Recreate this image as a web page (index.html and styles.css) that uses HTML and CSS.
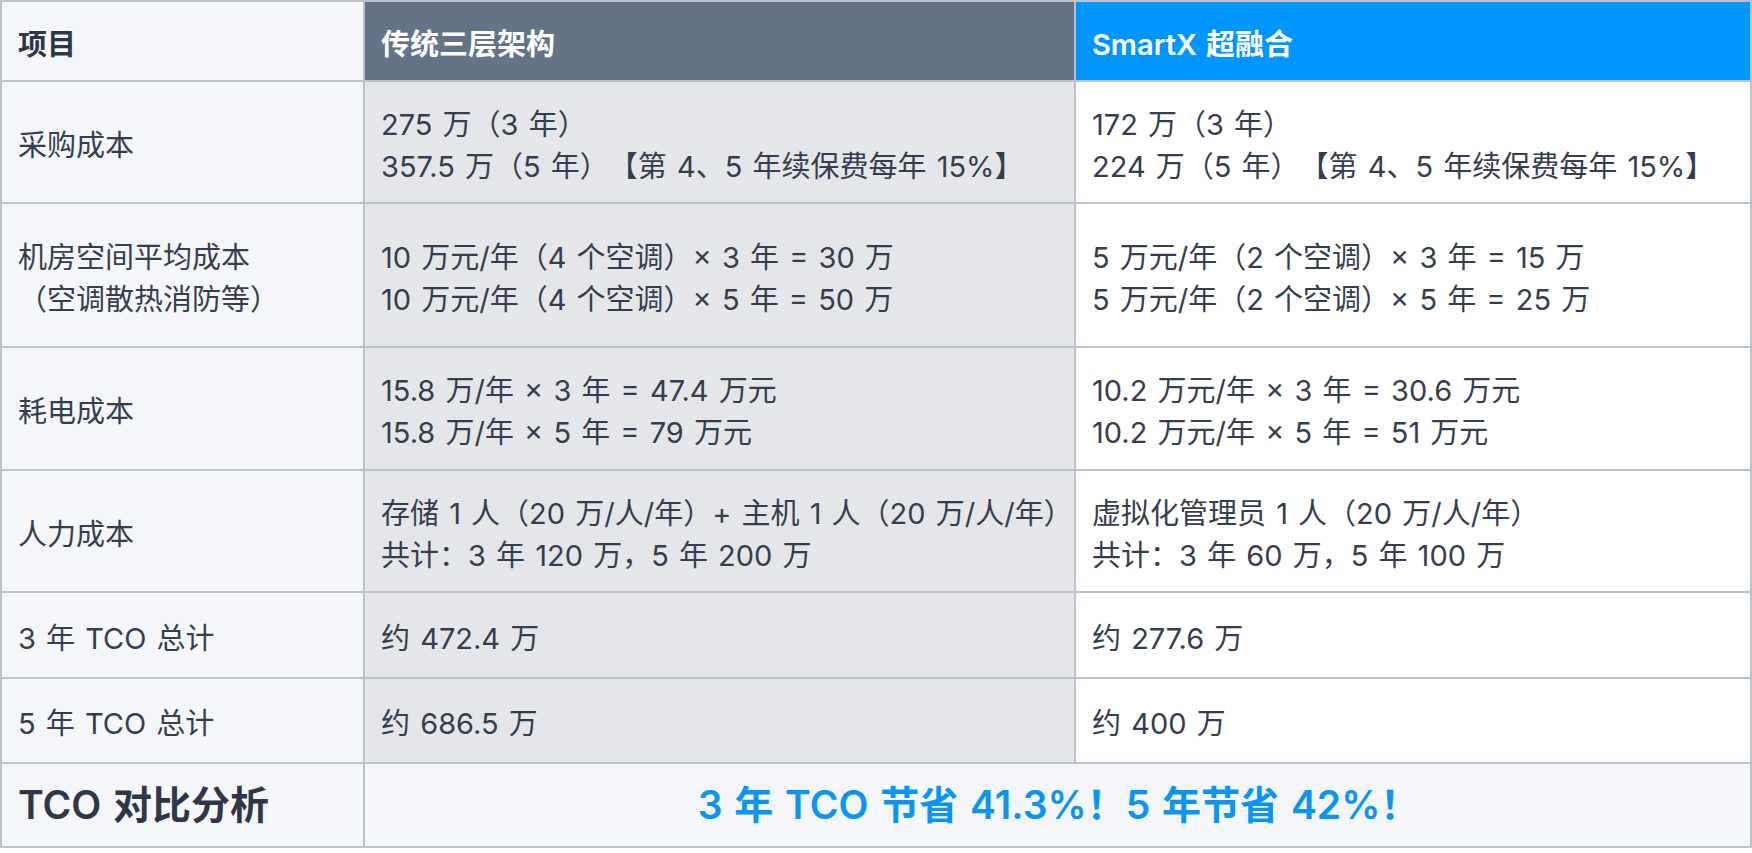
FILE: index.html
```html
<!DOCTYPE html>
<html lang="zh-CN">
<head>
    <meta charset="UTF-8">
    <meta name="viewport" content="width=device-width, initial-scale=1.0">
    <title>TCO 对比</title>
    <link rel="stylesheet" href="styles.css">
</head>
<body>
    <table class="tco-table">
        <colgroup>
            <col class="col-item">
            <col class="col-legacy">
            <col class="col-smartx">
        </colgroup>
        <thead>
            <tr class="row-head">
                <th class="cell-item">项目</th>
                <th class="cell-legacy">传统三层架构</th>
                <th class="cell-smartx">SmartX 超融合</th>
            </tr>
        </thead>
        <tbody>
            <tr class="row-1">
                <td class="cell-item">采购成本</td>
                <td class="cell-legacy">275 万（3 年）<br>357.5 万（5 年）【第 4、5 年续保费每年 15%】</td>
                <td class="cell-smartx">172 万（3 年）<br>224 万（5 年）【第 4、5 年续保费每年 15%】</td>
            </tr>
            <tr class="row-2">
                <td class="cell-item">机房空间平均成本<br>（空调散热消防等）</td>
                <td class="cell-legacy">10 万元/年（4 个空调）× 3 年 = 30 万<br>10 万元/年（4 个空调）× 5 年 = 50 万</td>
                <td class="cell-smartx">5 万元/年（2 个空调）× 3 年 = 15 万<br>5 万元/年（2 个空调）× 5 年 = 25 万</td>
            </tr>
            <tr class="row-3">
                <td class="cell-item">耗电成本</td>
                <td class="cell-legacy">15.8 万/年 × 3 年 = 47.4 万元<br>15.8 万/年 × 5 年 = 79 万元</td>
                <td class="cell-smartx">10.2 万元/年 × 3 年 = 30.6 万元<br>10.2 万元/年 × 5 年 = 51 万元</td>
            </tr>
            <tr class="row-4">
                <td class="cell-item">人力成本</td>
                <td class="cell-legacy">存储 1 人（20 万/人/年）+ 主机 1 人（20 万/人/年）<br>共计：3 年 120 万，5 年 200 万</td>
                <td class="cell-smartx">虚拟化管理员 1 人（20 万/人/年）<br>共计：3 年 60 万，5 年 100 万</td>
            </tr>
            <tr class="row-5">
                <td class="cell-item">3 年 TCO 总计</td>
                <td class="cell-legacy">约 472.4 万</td>
                <td class="cell-smartx">约 277.6 万</td>
            </tr>
            <tr class="row-6">
                <td class="cell-item">5 年 TCO 总计</td>
                <td class="cell-legacy">约 686.5 万</td>
                <td class="cell-smartx">约 400 万</td>
            </tr>
            <tr class="row-summary">
                <td class="cell-item summary-title">TCO 对比分析</td>
                <td class="summary-value" colspan="2">3 年 TCO 节省 41.3%！5 年节省 42%！</td>
            </tr>
        </tbody>
    </table>
</body>
</html>
```

FILE: styles.css
```css
body {
    margin: 0;
    background-color: #ffffff;
    font-family: Inter, "Noto Sans CJK SC", sans-serif;
    color: #363e4d;
    text-spacing-trim: space-all;
}

.tco-table {
    width: 1750px;
    border-collapse: collapse;
    table-layout: fixed;
    border: 2px solid #bcc1cb;
}

.col-item {
    width: 363px;
}

.col-legacy {
    width: 711px;
}

.col-smartx {
    width: 676px;
}

.tco-table th,
.tco-table td {
    border: 2px solid #bcc1cb;
    padding: 7px 14px 0 16px;
    font-size: 29px;
    line-height: 42px;
    word-spacing: 2px;
    text-align: left;
    vertical-align: middle;
    white-space: nowrap;
}

.tco-table th {
    font-weight: 600;
}

.cell-item {
    background-color: #f4f6fa;
}

.cell-legacy {
    background-color: #e4e6ea;
}

.cell-smartx {
    background-color: #ffffff;
}

th.cell-item {
    color: #2f3746;
}

th.cell-legacy {
    background-color: #647387;
    color: #ffffff;
}

th.cell-smartx {
    background-color: #0096ff;
    color: #ffffff;
}

.row-head { height: 80px; }
.row-1 { height: 122px; }
.row-2 { height: 144px; }
.row-3 { height: 123px; }
.row-4 { height: 122px; }
.row-5 { height: 86px; }
.row-6 { height: 85px; }
.row-summary { height: 84px; }

.row-summary td {
    padding-top: 0;
    font-size: 39px;
    font-weight: 600;
}

.summary-title {
    color: #2f3746;
}

.summary-value {
    background-color: #f4f6fa;
    text-align: center !important;
    color: #0b95f2;
}
```
